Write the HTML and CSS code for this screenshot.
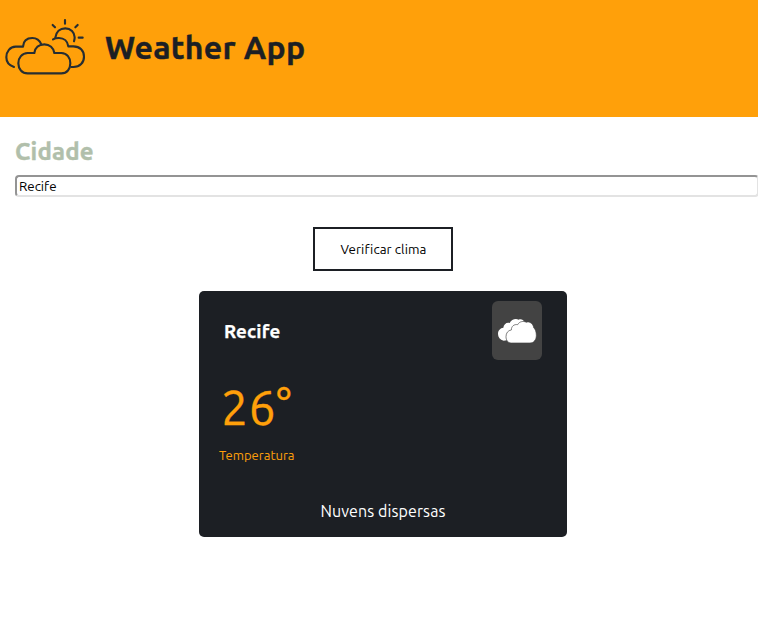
FILE: index.html
```html
<!DOCTYPE html>
<html lang="pt-BR">
<head>
<meta charset="utf-8">
<title>Weather App</title>
<link rel="stylesheet" href="styles.css">
</head>
<body>
<header class="header">
  <svg class="logo" viewBox="0 0 300 225" fill="none" stroke="#272e32" stroke-width="6.4" stroke-linecap="round" stroke-linejoin="round" aria-hidden="true">
    <path d="M83 190C66 190 55 177 55 160C55 143 66 130 83 129L103 129C105 113 117 103 133 103C149 103 161 114 163 129L184 129C201 130 211 143 211 160C211 177 201 190 184 190Z"/>
    <path d="M42 171C26 166 19 156 19 142C19 124 30 111 47 110L69 110C70 93 81 84 97 84C110 84 119 91 124 103"/>
    <path d="M159 88C164 85 171 84 177 84C192 84 203 94 205 109L220 109C240 109 252 122 252 140C252 158 240 171 220 171L214 171"/>
    <path d="M166 83C168 66 180 55 196 55C212 55 224 68 224 82C224 87 223 90 222 94"/>
    <path d="M195 30V41M158 45L165 52M233 45L226 52M236 83H248"/>
  </svg>
  <h1 class="title">Weather App</h1>
</header>
<main class="main">
  <label class="label" for="city">Cidade</label>
  <input class="city" id="city" type="text" value="Recife">
  <button class="check" type="button">Verificar clima</button>
  <section class="card">
    <div class="card-top">
      <h2 class="name">Recife</h2>
      <div class="icon">
        <svg viewBox="0 0 150 177" aria-hidden="true">
          <path fill="#fff" d="M35 119C24 116 18 109 18 99C18 88 25 81 34 80C35 70 44 63 53 66C58 56 70 51 80 56C88 53 94 57 98 64L90 110Z"/>
          <path fill="#fff" stroke="#434343" stroke-width="2" d="M58 126C48 126 42 118 42 107C42 96 48 88 58 87C58 76 66 69 77 71C82 61 95 59 103 64C112 60 124 68 125 80C130 84 133 93 133 103C133 117 125 126 114 126Z"/>
        </svg>
      </div>
    </div>
    <p class="degrees">26°</p>
    <p class="caption">Temperatura</p>
    <p class="condition">Nuvens dispersas</p>
  </section>
</main>
</body>
</html>
```

FILE: styles.css
```css
* { box-sizing: border-box; }
body {
  margin: 0;
  background: #fff;
  color: #1c1f24;
  font-family: Ubuntu, "Noto Sans", sans-serif;
  overflow: hidden;
}
.header {
  height: 117px;
  padding-top: 10px;
  display: flex;
  align-items: flex-start;
  background: #ffa00a;
}
.logo { width: 100px; height: 75px; }
.title {
  margin: 15px 0 0 5px;
  font-size: 32px;
  line-height: 44px;
  font-weight: 700;
  letter-spacing: 0.25px;
  white-space: nowrap;
  -webkit-text-stroke: 0.4px currentColor;
}
.main { padding: 19px 0 0 15px; }
.label {
  display: block;
  font-size: 24px;
  line-height: 32px;
  font-weight: 700;
  letter-spacing: 0.2px;
  color: #b1bfab;
  -webkit-text-stroke: 0.4px currentColor;
}
.city {
  display: block;
  width: 744px;
  height: 22px;
  margin-top: 7px;
  padding: 0 2px;
  border: 2px solid;
  border-color: #949494 #e3e3e3 #e3e3e3 #949494;
  border-radius: 4px;
  background: #fff;
  font: 13.333px/18px Ubuntu, "Noto Sans", sans-serif;
  color: #000;
}
.check {
  display: block;
  width: 140px;
  height: 44px;
  margin: 30px 0 0 298px;
  padding: 2px 0 0 1px;
  border: 2px solid #1c1f24;
  background: #fff;
  font: 13.333px/18px Ubuntu, "Noto Sans", sans-serif;
  letter-spacing: 0.08px;
  color: #000;
}
.card {
  width: 368px;
  height: 246px;
  margin: 20px 0 0 184px;
  padding: 10px 25px 0;
  border-radius: 5px;
  background: #1c1f24;
  color: #fff;
}
.card-top { display: flex; justify-content: space-between; }
.name {
  margin: 18px 0 0;
  font-size: 18.72px;
  line-height: 26px;
  font-weight: 700;
  letter-spacing: 0.15px;
  -webkit-text-stroke: 0.25px currentColor;
}
.icon {
  width: 50px;
  height: 59px;
  border-radius: 6px;
  background: #434343;
}
.icon svg { display: block; width: 50px; height: 59px; }
.degrees {
  margin: 17px 0 0 -3px;
  font-size: 48px;
  line-height: 60px;
  letter-spacing: 0.4px;
  color: #ffa00a;
  -webkit-text-stroke: 0.3px currentColor;
}
.caption {
  margin: 9px 0 0 -5px;
  font-size: 13px;
  line-height: 18px;
  color: #ffa00a;
}
.condition {
  margin: 35px 0 0;
  font-size: 16px;
  line-height: 24px;
  letter-spacing: 0.1px;
  text-align: center;
}
```
